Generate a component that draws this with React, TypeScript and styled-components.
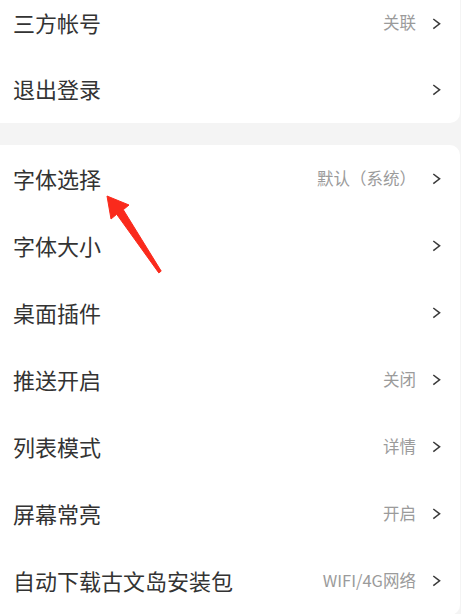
import React from 'react';
import styled, { createGlobalStyle } from 'styled-components';

const GlobalStyle = createGlobalStyle`
    html, body {
        margin: 0;
        padding: 0;
        background: #f4f4f4;
        font-family: "Noto Sans CJK SC", "Noto Sans", sans-serif;
        overflow: hidden;
    }
`;

const Page = styled.div`
    position: relative;
    width: 461px;
    height: 614px;
    overflow: hidden;
    background: #f4f4f4;
`;

const Card = styled.div<{ $first?: boolean }>`
    display: flex;
    flex-direction: column;
    width: 460px;
    margin-top: ${(p) => (p.$first ? '-9px' : '22px')};
    padding-top: ${(p) => (p.$first ? '0' : '1px')};
    background: #fff;
    border-radius: 0 10px 10px 0;
`;

const Row = styled.div<{ $h?: number }>`
    box-sizing: border-box;
    height: ${(p) => p.$h ?? 67}px;
    display: flex;
    align-items: center;
    padding: 0 19px 4px 13px;
    .label {
        flex: 1;
        font-size: 22px;
        color: #333;
    }
    .value {
        font-size: 16.5px;
        color: #9b9b9b;
        margin-right: 16px;
    }
`;

const Chevron = styled.svg`
    width: 9px;
    height: 12px;
    display: block;
    margin-top: 3px;
`;

const Pointer = styled.svg`
    position: absolute;
    left: 100px;
    top: 190px;
    width: 70px;
    height: 90px;
    pointer-events: none;
`;

type Item = { label: string; value?: string };

const accountItems: Item[] = [
    { label: '三方帐号', value: '关联' },
    { label: '退出登录' },
];

const settingItems: Item[] = [
    { label: '字体选择', value: '默认（系统）' },
    { label: '字体大小' },
    { label: '桌面插件' },
    { label: '推送开启', value: '关闭' },
    { label: '列表模式', value: '详情' },
    { label: '屏幕常亮', value: '开启' },
    { label: '自动下载古文岛安装包', value: 'WIFI/4G网络' },
];

const SettingRow = ({ item, h }: { item: Item; h?: number }) => (
    <Row $h={h}>
        <span className="label">{item.label}</span>
        {item.value && <span className="value">{item.value}</span>}
        <Chevron viewBox="0 0 9 12">
            <polyline points="1.3,1 7.6,5.8 1.3,10.6" fill="none" stroke="#3a3a3a" strokeWidth="1.5" />
        </Chevron>
    </Row>
);

const App = () => {
    return (
        <Page>
            <GlobalStyle />
            <Card $first>
                {accountItems.map((it) => (
                    <SettingRow key={it.label} item={it} h={66} />
                ))}
            </Card>
            <Card>
                {settingItems.map((it) => (
                    <SettingRow key={it.label} item={it} />
                ))}
            </Card>
            <Pointer viewBox="100 190 70 90">
                <polygon
                    points="107,196 129,205 123.3,209.7 161.2,271.1 158.8,272.9 116.7,214.3 111,219"
                    fill="#fa2a1c"
                    strokeLinejoin="round"
                    stroke="#fa2a1c"
                    strokeWidth="1"
                />
            </Pointer>
        </Page>
    );
};

export default App;
